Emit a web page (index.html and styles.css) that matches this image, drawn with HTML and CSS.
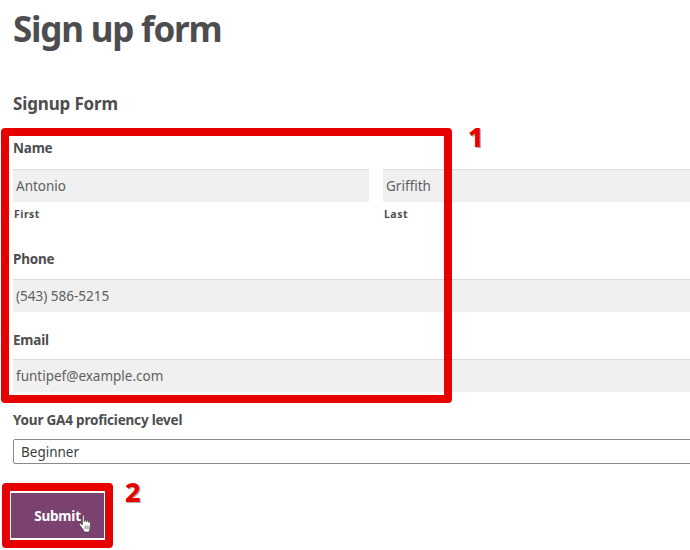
FILE: index.html
```html
<!DOCTYPE html>
<html lang="en">
<head>
  <meta charset="UTF-8">
  <title>Sign up form</title>
  <link rel="stylesheet" href="styles.css">
</head>
<body>

<div class="page">
  <h1 class="page-title">Sign up form</h1>
  <h2 class="form-title">Signup Form</h2>

  <form class="signup">
    <div class="field field-name">
      <div class="label">Name</div>
      <div class="name-row">
        <div>
          <div class="input">Antonio</div>
          <div class="sublabel">First</div>
        </div>
        <div>
          <div class="input">Griffith</div>
          <div class="sublabel">Last</div>
        </div>
      </div>
    </div>

    <div class="field field-phone">
      <div class="label">Phone</div>
      <div class="input">(543) 586-5215</div>
    </div>

    <div class="field field-email">
      <div class="label">Email</div>
      <div class="input">funtipef@example.com</div>
    </div>

    <div class="field field-level">
      <div class="label">Your GA4 proficiency level</div>
      <div class="select">Beginner</div>
    </div>

    <div class="submit">Submit</div>
  </form>
</div>

<!-- annotations drawn over the form -->
<div class="mark mark-fields"></div>
<div class="mark mark-submit"></div>
<div class="step step-1">1</div>
<div class="step step-2">2</div>

<svg class="hand" viewBox="0 0 14 19" width="15" height="20">
  <path d="M4 1.800c0-1.100 1.800-1.100 1.800 0v5.400l.5-.1V6.200c0-1 1.600-1 1.600 0v1.100l.4.100V6.800c0-1 1.500-1 1.500 0v1l.4.100c0-.9 1.500-.9 1.500.1v4.200c0 1.800-.5 2.700-1 3.600v1.400H5.400v-1.300C4 14 2.700 12.200 1.200 10.200c-.7-1 .5-2 1.400-1.200L4 10.300z" fill="#fff" stroke="#333" stroke-width=".7" stroke-linejoin="round"/>
  <path d="M6.700 11v3.500M8.500 11v3.500M10.300 11v3.500" stroke="#333" stroke-width=".6" fill="none"/>
</svg>

</body>
</html>
```

FILE: styles.css
```css
body {
  margin: 0;
  width: 690px;
  height: 550px;
  overflow: hidden;
  position: relative;
  background: #fff;
  color: #4d4d4f;
  font-family: "Noto Sans", sans-serif;
}

.page {
  box-sizing: border-box;
  width: 690px;
  height: 550px;
  padding: 4px 0 0 13px;
  overflow: hidden;
}

.page-title {
  margin: 0;
  font-size: 35px;
  line-height: 50px;
  font-weight: 700;
  letter-spacing: -1.2px;
}

.form-title {
  margin: 37px 0 0;
  font-size: 17px;
  line-height: 26px;
  font-weight: 700;
  letter-spacing: -0.15px;
}

.signup {
  display: flex;
  flex-direction: column;
  width: 727px;
}

.label {
  font-size: 13.5px;
  line-height: 20px;
  font-weight: 700;
  letter-spacing: -0.2px;
}

.field-name {
  margin-top: 21px;
}

.name-row {
  display: grid;
  grid-template-columns: 356px 1fr;
  column-gap: 14px;
  margin-top: 11px;
}

.input {
  height: 32px;
  padding-left: 3px;
  border-top: 1px solid #dcdcdc;
  background: #f0f0f0;
  color: #5f5f61;
  font-size: 13.5px;
  line-height: 33px;
}

.sublabel {
  margin-top: 5px;
  font-size: 10.5px;
  line-height: 14px;
  font-weight: 700;
  letter-spacing: 0.5px;
  padding-left: 1px;
}

.field-phone {
  margin-top: 28px;
}

.field-phone .input {
  margin-top: 10px;
}

.field-email {
  margin-top: 18px;
}

.field-email .input {
  margin-top: 9px;
}

.field-level {
  margin-top: 18px;
}

.select {
  margin-top: 9px;
  height: 23px;
  padding-left: 7px;
  border: 1px solid #8a8a8a;
  border-radius: 2px;
  color: #3c3c3e;
  font-size: 13.5px;
  line-height: 24px;
}

.submit {
  margin: 28px 0 0 -3px;
  width: 93px;
  height: 45px;
  border: 1px solid #fff;
  background: #7b4270;
  color: #fff;
  font-size: 13.5px;
  font-weight: 700;
  line-height: 46px;
  text-align: center;
  letter-spacing: -0.2px;
}

.mark {
  position: absolute;
  box-sizing: border-box;
  border: 8px solid #e60000;
  border-radius: 4px;
}

.mark-fields {
  left: 1px;
  top: 128px;
  width: 451px;
  height: 275px;
}

.mark-submit {
  left: 2px;
  top: 483px;
  width: 111px;
  height: 65px;
}

.step {
  position: absolute;
  color: #e60000;
  font-size: 27px;
  line-height: 30px;
  font-weight: 800;
  -webkit-text-stroke: 2px #fff;
  paint-order: stroke fill;
  text-shadow: 1px 1px 0 #aaa;
}

.step-1 {
  left: 468px;
  top: 122px;
}

.step-2 {
  left: 125px;
  top: 477px;
}

.hand {
  position: absolute;
  left: 78px;
  top: 514px;
}
```
